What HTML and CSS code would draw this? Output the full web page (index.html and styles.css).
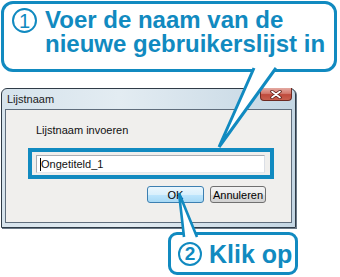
FILE: index.html
```html
<!DOCTYPE html>
<html lang="nl">
    <head>
        <meta charset="utf-8">
        <title>Lijstnaam</title>
        <link rel="stylesheet" href="styles.css">
    </head>
    <body>
        <div class="stage">
            <div class="callout callout-top">
                <span class="step">1</span>
                <p class="callout-text">Voer de naam van de<br>nieuwe gebruikerslijst in</p>
            </div>

            <div class="dialog">
                <div class="titlebar">
                    <span class="title">Lijstnaam</span>
                    <span class="close">
                        <svg width="12" height="9" viewBox="0 0 12 9">
                            <path d="M2 1.5 L10 7.5 M10 1.5 L2 7.5" stroke="#5a1c14" stroke-width="3.4" stroke-linecap="round"/>
                            <path d="M2 1.5 L10 7.5 M10 1.5 L2 7.5" stroke="#ffffff" stroke-width="1.7" stroke-linecap="round"/>
                        </svg>
                    </span>
                </div>
                <div class="client">
                    <p class="prompt">Lijstnaam invoeren</p>
                    <div class="field"><span class="caret"></span>Ongetiteld_1</div>
                    <div class="buttons">
                        <button class="btn btn-default" type="button">OK</button>
                        <button class="btn" type="button">Annuleren</button>
                    </div>
                </div>
            </div>

            <div class="callout callout-bottom">
                <span class="step step-small">2</span>
                <span class="callout-label">Klik op</span>
            </div>

            <!-- highlight round the text field and the two pointers -->
            <div class="focus-ring"></div>
            <svg class="tails" width="340" height="277" viewBox="0 0 340 277">
                <polygon points="254,68 276,68 219,147" fill="#ffffff"/>
                <path d="M254 68 L219 147 M276 68 L219 147" stroke="#118ac0" stroke-width="3" fill="none" stroke-linejoin="round"/>
                <polygon points="180,202 182.7,202 197,237 184,237" fill="#ffffff"/>
                <path d="M184 237 L179 193 M197 237 L179 193" stroke="#118ac0" stroke-width="2.6" fill="none" stroke-linejoin="round"/>
            </svg>
        </div>
    </body>
</html>
```

FILE: styles.css
```css
body {
    margin: 0;
    background-color: #ffffff;
    font-family: "Liberation Sans", Arial, sans-serif;
}

.stage {
    position: relative;
    width: 340px;
    height: 277px;
    overflow: hidden;
}

/* blue speech bubbles */
.callout {
    display: flex;
    box-sizing: border-box;
    border: 3px solid #118ac0;
    background-color: #ffffff;
    color: #118ac0;
}

.callout-top {
    margin: 1px 0 0 1px;
    width: 336px;
    height: 71px;
    border-radius: 12px;
    padding: 4px 0 0 8px;
    gap: 8px;
    align-items: flex-start;
}

.callout-bottom {
    margin: 4px 0 0 168px;
    width: 130px;
    height: 43px;
    border-radius: 9px;
    padding: 0 0 0 7px;
    gap: 7px;
    align-items: center;
}

.step {
    display: flex;
    align-items: center;
    justify-content: center;
    box-sizing: border-box;
    width: 25px;
    height: 25px;
    border: 2px solid #118ac0;
    border-radius: 50%;
    font-size: 20px;
    line-height: 1;
    flex-shrink: 0;
}

.step-small {
    width: 24px;
    height: 24px;
    font-size: 19px;
    font-weight: bold;
}

.callout-text {
    margin: 0;
    font-size: 24px;
    font-weight: bold;
    line-height: 24px;
    white-space: nowrap;
}

.callout-label {
    font-size: 25px;
    font-weight: bold;
    line-height: 26px;
}

/* the window */
.dialog {
    margin: 16px 0 0 1px;
    width: 295px;
    height: 140px;
    box-sizing: border-box;
    border: 1px solid #2f3b47;
    border-radius: 6px 6px 0 0;
    background: linear-gradient(to right, #d6e3ec, #e3ecf2 40%, #c4d6e3);
    box-shadow: 1px 1px 0 #6b7a88;
}

.titlebar {
    display: flex;
    height: 20px;
    align-items: flex-start;
}

.title {
    padding-left: 5px;
    font-size: 11px;
    line-height: 20px;
    color: #1b1b1b;
}

.close {
    display: flex;
    align-items: center;
    justify-content: center;
    margin: -1px 3px 0 auto;
    width: 32px;
    height: 13px;
    box-sizing: border-box;
    border: 1px solid #6d2a22;
    border-top: none;
    border-radius: 0 0 4px 4px;
    background: linear-gradient(#e4aaa2, #d47a6e 45%, #bf4a3c 55%, #c8604f);
}

.client {
    margin: 0 3px;
    height: 114px;
    box-sizing: border-box;
    border: 1px solid #5f6d7c;
    background-color: #f0efed;
    padding-left: 30px;
}

.prompt {
    margin: 14px 0 0;
    font-size: 11px;
    line-height: 13px;
    color: #111111;
}

.field {
    margin-top: 18px;
    width: 229px;
    height: 18px;
    box-sizing: border-box;
    border: 1px solid #abadb3;
    border-right-color: #dbdfe6;
    border-bottom-color: #e3e9ef;
    background-color: #ffffff;
    padding-left: 3px;
    font-size: 11px;
    line-height: 16px;
    color: #111111;
}

.caret {
    display: inline-block;
    width: 1px;
    height: 13px;
    vertical-align: -3px;
    background-color: #000000;
}

.buttons {
    display: flex;
    gap: 6px;
    margin: 13px 0 0 111px;
}

.btn {
    width: 56px;
    height: 17px;
    padding: 0;
    box-sizing: border-box;
    border: 1px solid #707070;
    border-radius: 3px;
    background: linear-gradient(#f3f3f3, #ebebeb 50%, #dcdcdc 51%, #d2d2d2);
    font-family: "Liberation Sans", Arial, sans-serif;
    font-size: 11px;
    color: #000000;
}

.btn-default {
    width: 57px;
    border-color: #3c7fb1;
    background: linear-gradient(#eaf6fd, #d9f0fc 50%, #bee6fd 51%, #a7d9f5);
}

/* overlays */
.focus-ring {
    position: absolute;
    left: 28px;
    top: 148px;
    width: 246px;
    height: 31px;
    box-sizing: border-box;
    border: 4px solid #118ac0;
}

.tails {
    position: absolute;
    left: 0;
    top: 0;
}
```
